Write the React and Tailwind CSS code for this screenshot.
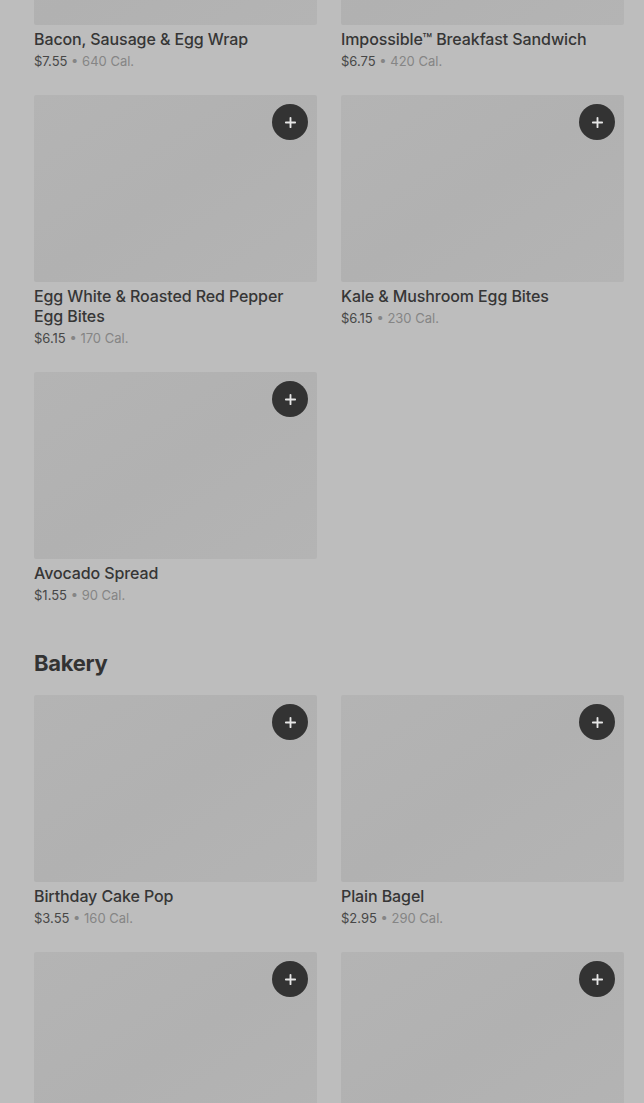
const breakfast = [
  { name: "Bacon, Sausage & Egg Wrap", price: "$7.55", cal: "640 Cal." },
  { name: "Impossible™ Breakfast Sandwich", price: "$6.75", cal: "420 Cal." },
  { name: "Egg White & Roasted Red Pepper Egg Bites", price: "$6.15", cal: "170 Cal." },
  { name: "Kale & Mushroom Egg Bites", price: "$6.15", cal: "230 Cal." },
  { name: "Avocado Spread", price: "$1.55", cal: "90 Cal." },
];

const bakery = [
  { name: "Birthday Cake Pop", price: "$3.55", cal: "160 Cal." },
  { name: "Plain Bagel", price: "$2.95", cal: "290 Cal." },
  { name: "Butter Croissant", price: "$3.45", cal: "260 Cal." },
  { name: "Chocolate Croissant", price: "$3.95", cal: "300 Cal." },
];

const Item = ({ item }) => (
  <div className="flex flex-col">
    <div className="relative h-[187px] rounded-[2px] bg-gradient-to-br from-[#b4b4b4] via-[#b1b1b1] to-[#b4b4b4]">
      <button className="absolute right-[9px] top-[9px] flex h-9 w-9 items-center justify-center rounded-full bg-[#333333]">
        <svg width="13" height="13" viewBox="0 0 14 14" fill="none">
          <path d="M7 2v10M2 7h10" stroke="#e6e6e6" strokeWidth="2" strokeLinecap="round" />
        </svg>
      </button>
    </div>
    <div className="mt-[4px] pr-3 text-[16px] font-medium leading-5 tracking-[-0.1px] text-[#363636]">{item.name}</div>
    <div className="mt-[2px] text-[13px] leading-5 text-[#474747]">
      {item.price}
      <span className="text-[#858585]"> • {item.cal}</span>
    </div>
  </div>
);

const App = () => {
  return (
    <div
      className="h-[1103px] w-full overflow-hidden bg-[#bdbdbd] pl-[34px] pr-[20px]"
      style={{ fontFamily: "Inter, 'Liberation Sans', sans-serif" }}
    >
      <div className="-mt-[162px]">
        <div className="grid grid-cols-2 gap-x-6 gap-y-6">
          {breakfast.map((item) => (
            <Item key={item.name} item={item} />
          ))}
        </div>

        <h2 className="mt-[44px] text-[22px] font-bold leading-7 tracking-[-0.3px] text-[#333333]">Bakery</h2>

        <div className="mt-[18px] grid grid-cols-2 gap-x-6 gap-y-6">
          {bakery.map((item) => (
            <Item key={item.name} item={item} />
          ))}
        </div>
      </div>
    </div>
  );
};

export default App;
